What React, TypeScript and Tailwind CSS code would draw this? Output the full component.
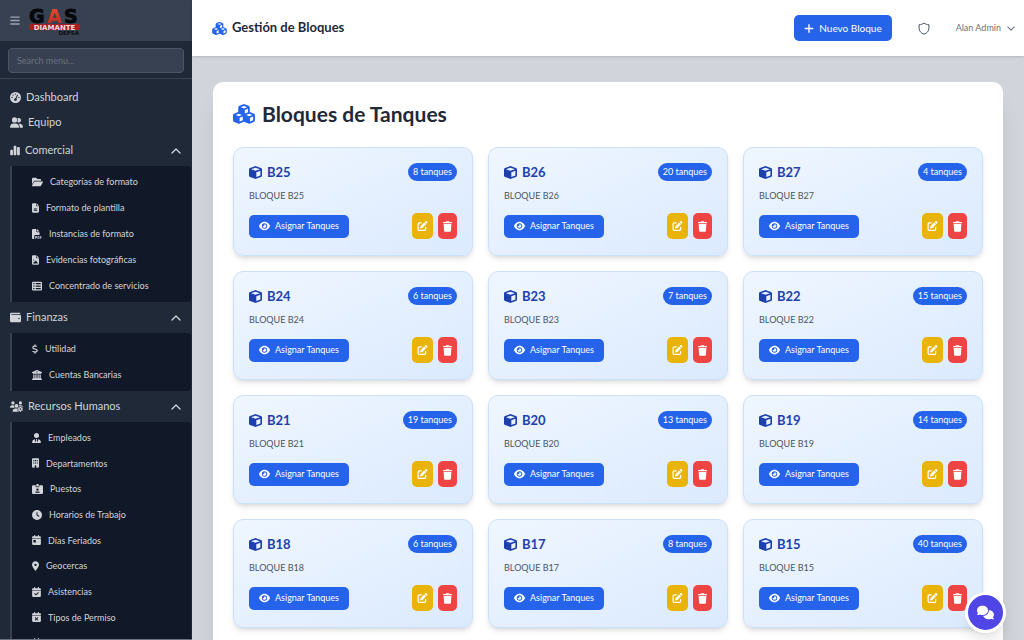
import type { ReactNode } from 'react';
import type { IconType } from 'react-icons';
import {
  FaBars, FaBuilding, FaBuildingColumns, FaCalendarCheck, FaCalendarDay, FaCalendarXmark, FaChartSimple,
  FaClock, FaComments, FaCube, FaCubes, FaDollarSign, FaEye, FaFileImage, FaFileLines, FaFilePdf, FaFolderOpen,
  FaGaugeHigh, FaIdCardClip, FaLocationDot, FaPenToSquare, FaPlus, FaTableList, FaTrash, FaUserGroup,
  FaUserTie, FaUsersGear, FaWallet,
} from 'react-icons/fa6';

type Item = { label: string; icon: IconType; iconWidth: string };

const comercial: Item[] = [
  { label: 'Categorías de formato', icon: FaFolderOpen, iconWidth: 'w-[11px]' },
  { label: 'Formato de plantilla', icon: FaFileLines, iconWidth: 'w-[7px]' },
  { label: 'Instancias de formato', icon: FaFilePdf, iconWidth: 'w-[10px]' },
  { label: 'Evidencias fotográficas', icon: FaFileImage, iconWidth: 'w-[7px]' },
  { label: 'Concentrado de servicios', icon: FaTableList, iconWidth: 'w-[10px]' },
];

const finanzas: Item[] = [
  { label: 'Utilidad', icon: FaDollarSign, iconWidth: 'w-[6px]' },
  { label: 'Cuentas Bancarias', icon: FaBuildingColumns, iconWidth: 'w-[10px]' },
];

const recursos: Item[] = [
  { label: 'Empleados', icon: FaUserTie, iconWidth: 'w-[9px]' },
  { label: 'Departamentos', icon: FaBuilding, iconWidth: 'w-[7px]' },
  { label: 'Puestos', icon: FaIdCardClip, iconWidth: 'w-[11px]' },
  { label: 'Horarios de Trabajo', icon: FaClock, iconWidth: 'w-[10px]' },
  { label: 'Días Feriados', icon: FaCalendarDay, iconWidth: 'w-[9px]' },
  { label: 'Geocercas', icon: FaLocationDot, iconWidth: 'w-[7px]' },
  { label: 'Asistencias', icon: FaCalendarCheck, iconWidth: 'w-[9px]' },
  { label: 'Tipos de Permiso', icon: FaCalendarXmark, iconWidth: 'w-[9px]' },
  { label: 'Permisos', icon: FaCalendarCheck, iconWidth: 'w-[9px]' },
];

const blocks = [
  { id: 'B25', tanks: 8 },
  { id: 'B26', tanks: 20 },
  { id: 'B27', tanks: 4 },
  { id: 'B24', tanks: 6 },
  { id: 'B23', tanks: 7 },
  { id: 'B22', tanks: 15 },
  { id: 'B21', tanks: 19 },
  { id: 'B20', tanks: 13 },
  { id: 'B19', tanks: 14 },
  { id: 'B18', tanks: 6 },
  { id: 'B17', tanks: 8 },
  { id: 'B15', tanks: 40 },
];

function Logo() {
  return (
    <svg viewBox="0 0 52 28" className="h-7 w-[52px] overflow-visible" role="img" aria-label="Gas Diamante Depsa">
      <defs>
        <linearGradient id="flame" x1="0" y1="0" x2="0" y2="1">
          <stop offset="0" stopColor="#f0562b" />
          <stop offset="1" stopColor="#b3261f" />
        </linearGradient>
      </defs>
      <g fontFamily="DejaVu Sans, sans-serif" fontWeight="700">
        <text x="0" y="16" fontSize="19" fill="#06080c" stroke="#06080c" strokeWidth="0.8">G</text>
        <text x="18" y="16" fontSize="19" fill="url(#flame)">A</text>
        <text x="35" y="16" fontSize="19" fill="#06080c" stroke="#06080c" strokeWidth="0.8">S</text>
        <rect x="0" y="17" width="51" height="6" rx="1" fill="#a91c20" />
        <text x="25.5" y="22.500" fontSize="7" textAnchor="middle" fill="#f3dcdc">DIAMANTE</text>
        <text x="50" y="27.500" fontSize="5.500" textAnchor="end" fill="#0b0e14">DEPSA</text>
      </g>
    </svg>
  );
}

function Chevron({ up = false, className }: { up?: boolean; className: string }) {
  return (
    <svg viewBox="0 0 10 6" fill="none" stroke="currentColor" strokeWidth="1.3" strokeLinecap="round" strokeLinejoin="round" className={className}>
      <path d={up ? 'M1 5l4-4 4 4' : 'M1 1l4 4 4-4'} />
    </svg>
  );
}

function NavLink({ label, icon: Icon, iconWidth }: Item) {
  return (
    <a href="#" className="flex h-[25px] items-center gap-[5px] px-[10px] text-[11px]">
      <Icon className={`h-[11px] ${iconWidth}`} />
      {label}
    </a>
  );
}

function NavGroup({ label, icon: Icon, iconWidth, items, listHeight }: Item & { items: Item[]; listHeight: string }) {
  return (
    <section>
      <button className="flex h-[31px] w-full items-center gap-[5px] px-[10px] text-[11px]">
        <Icon className={`h-[11px] ${iconWidth}`} />
        {label}
        <Chevron up className="ml-auto mr-px h-[6px] w-[10px]" />
      </button>
      <div className="ml-[10px] mr-px rounded-r border-l-2 border-[#374151] bg-[#111827] py-[3px] pl-5">
        <ul className={`grid auto-rows-fr ${listHeight}`}>
          {items.map(({ label: text, icon: ItemIcon, iconWidth: itemWidth }) => (
            <li key={text} className="flex">
              <a href="#" className="flex items-center gap-[7px] text-[9px]">
                <ItemIcon className={`h-[10px] ${itemWidth}`} />
                {text}
              </a>
            </li>
          ))}
        </ul>
      </div>
    </section>
  );
}

function Sidebar() {
  return (
    <aside className="flex w-48 shrink-0 flex-col overflow-hidden border-b border-[#6b7280] bg-[#1f2937] text-[#d1d5db]">
      <div className="flex h-[41px] shrink-0 items-center gap-[9px] bg-[#374151] px-[10px]">
        <button aria-label="Menú" className="text-[#9ca3af]">
          <FaBars className="h-[11px] w-[10px]" />
        </button>
        <Logo />
      </div>
      <div className="shrink-0 border-b border-[#374151] px-2 pb-[5px] pt-[7px]">
        <input
          type="text"
          aria-label="Search menu"
          placeholder="Search menu..."
          className="block h-[25px] w-full rounded border border-[#4b5563] bg-[#374151] px-2 text-[9px] placeholder:text-[#6b7280]"
        />
      </div>
      <nav className="flex flex-col pt-[6px]">
        <NavLink label="Dashboard" icon={FaGaugeHigh} iconWidth="w-[11px]" />
        <NavLink label="Equipo" icon={FaUserGroup} iconWidth="w-[13px]" />
        <NavGroup label="Comercial" icon={FaChartSimple} iconWidth="w-[10px]" items={comercial} listHeight="h-[130px]" />
        <NavGroup label="Finanzas" icon={FaWallet} iconWidth="w-[11px]" items={finanzas} listHeight="h-[52px]" />
        <NavGroup label="Recursos Humanos" icon={FaUsersGear} iconWidth="w-[13px]" items={recursos} listHeight="h-[231px]" />
      </nav>
    </aside>
  );
}

function IconButton({ label, className, children }: { label: string; className: string; children: ReactNode }) {
  return (
    <button aria-label={label} className={`flex h-[26px] items-center rounded-[5px] px-[5px] text-white ${className}`}>
      {children}
    </button>
  );
}

function BlockCard({ id, tanks }: { id: string; tanks: number }) {
  return (
    <article className="rounded-[10px] border border-[#cbe0fd] bg-linear-to-br from-[#eff6ff] to-[#dbeafe] px-[15px] pb-4 pt-[15px] shadow-md">
      <div className="flex items-center justify-between">
        <h3 className="flex items-center gap-[5px] text-[13px] font-bold leading-[18px] text-[#1e40af]">
          <FaCube className="size-[13px]" />
          {id}
        </h3>
        <span className="rounded-full bg-[#2563eb] px-[5px] text-[9px] leading-[18px] text-white">{tanks} tanques</span>
      </div>
      <p className="mt-2 text-[9px] leading-[14px] text-[#4b5563]">BLOQUE {id}</p>
      <div className="mt-[10px] flex items-center justify-between">
        <button className="flex h-[23px] items-center gap-[5px] rounded-[5px] bg-[#2563eb] px-[10px] text-[9px] text-white">
          <FaEye className="h-[10px] w-[11px]" />
          Asignar Tanques
        </button>
        <div className="flex gap-[5px]">
          <IconButton label={`Editar ${id}`} className="bg-[#eab308]">
            <FaPenToSquare className="h-[10px] w-[11px]" />
          </IconButton>
          <IconButton label={`Eliminar ${id}`} className="bg-[#ef4444]">
            <FaTrash className="h-[11px] w-[9px]" />
          </IconButton>
        </div>
      </div>
    </article>
  );
}

function TopBar() {
  return (
    <header className="z-10 flex h-14 shrink-0 items-center justify-between bg-white pl-5 pr-[9px] shadow">
      <h1 className="flex items-center gap-[5px] text-[13px] font-bold text-[#1f2937]">
        <FaCubes className="h-[13px] w-[15px] text-[#2563eb]" />
        Gestión de Bloques
      </h1>
      <div className="flex items-center">
        <button className="flex h-[26px] items-center gap-[5px] rounded-[5px] bg-[#2563eb] px-[10px] text-[10px] text-white">
          <FaPlus className="h-[11px] w-[10px]" />
          Nuevo Bloque
        </button>
        <button aria-label="Seguridad" className="ml-[26px] text-[#4b5563]">
          <svg viewBox="0 0 12 13" fill="none" stroke="currentColor" strokeLinejoin="round" className="h-[13px] w-3">
            <path d="M6 1C4.600 2.100 3 2.600 1.100 2.700V6.200C1.100 9 3 11.200 6 12.200C9 11.200 10.900 9 10.900 6.200V2.700C9 2.600 7.400 2.100 6 1Z" />
          </svg>
        </button>
        <button className="ml-[26px] flex items-center gap-[6px] text-[9px] text-[#6b7280]">
          Alan Admin
          <Chevron className="h-[5px] w-2" />
        </button>
      </div>
    </header>
  );
}

export default function App() {
  return (
    <div className="flex h-screen overflow-hidden bg-[#d1d5db] font-['Lato','Noto_Sans',sans-serif]">
      <Sidebar />
      <div className="flex min-w-0 flex-1 flex-col">
        <TopBar />
        <main className="flex-1 overflow-y-auto p-[21px] pt-[26px] [scrollbar-width:none]">
          <section className="rounded-[10px] bg-white p-5 shadow-xl">
            <h2 className="mb-[21px] flex items-center gap-[7px] text-[21px] font-bold leading-[24px] text-[#1f2937]">
              <FaCubes className="h-5 w-[22px] text-[#2563eb]" />
              Bloques de Tanques
            </h2>
            <div className="grid grid-cols-3 gap-[15px]">
              {blocks.map((block) => (
                <BlockCard key={block.id} {...block} />
              ))}
            </div>
          </section>
        </main>
      </div>
      <button
        aria-label="Abrir chat"
        className="fixed bottom-[7px] right-[18px] z-20 flex size-[41px] items-center justify-center rounded-full border-3 border-white bg-[#4f46e5] text-white shadow-lg"
      >
        <FaComments className="h-[15px] w-[17px]" />
      </button>
    </div>
  );
}
